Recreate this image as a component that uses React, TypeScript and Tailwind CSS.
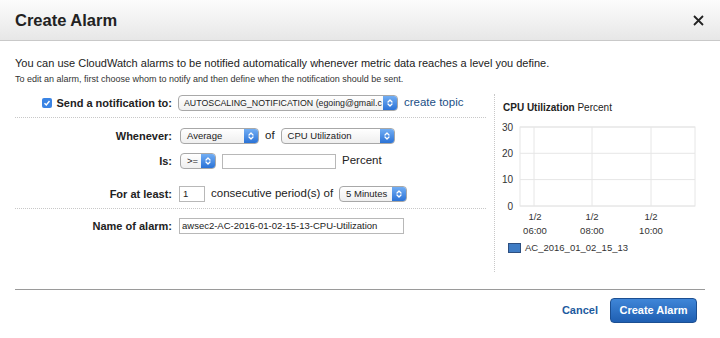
import React from 'react';

const Stepper: React.FC = () => (
  <span className="flex h-full w-[14px] shrink-0 items-center justify-center rounded-r-[3px] bg-linear-to-b from-[#72aef4] to-[#2a72d6]">
    <svg width="6" height="10" viewBox="0 0 6 10">
      <path d="M1 4 L3 2 L5 4 M1 6 L3 8 L5 6" stroke="#fff" strokeWidth="1.3" fill="none" strokeLinecap="round" strokeLinejoin="round" />
    </svg>
  </span>
);

interface SelectProps {
  value: string;
  className: string;
}

const Select: React.FC<SelectProps> = ({ value, className }) => (
  <div className={`flex h-[16px] shrink-0 items-stretch rounded-[4px] border border-[#a8a8a8] bg-linear-to-b from-white to-[#efefef] ${className}`}>
    <span className="flex-1 overflow-hidden whitespace-nowrap pl-[6px] text-[9.5px] leading-[14px] text-[#222]">{value}</span>
    <Stepper />
  </div>
);

const Label: React.FC<{ children: React.ReactNode }> = ({ children }) => (
  <div className="w-[157px] shrink-0 text-right text-[11px] font-bold text-[#222]">{children}</div>
);

const Chart: React.FC = () => {
  const hLines = [8, 34.3, 60.6, 87];
  const vLines = [34, 92, 151];
  return (
    <svg width="200" height="120" viewBox="0 0 200 120" className="block">
      <rect x="20" y="8" width="175" height="79" fill="#fff" stroke="#e6e6e6" />
      {hLines.map((y) => (
        <line key={y} x1="20" x2="195" y1={y} y2={y} stroke="#e6e6e6" />
      ))}
      {vLines.map((x) => (
        <line key={x} x1={x} x2={x} y1="8" y2="87" stroke="#e6e6e6" />
      ))}
      {['30', '20', '10', '0'].map((t, i) => (
        <text key={t} x="13" y={hLines[i] + 3.5} textAnchor="end" fontSize="10" fill="#333" fontFamily="Liberation Sans, Arial, sans-serif">{t}</text>
      ))}
      {[35, 92, 151].map((x, i) => (
        <g key={x} fontSize="9.5" fill="#333" fontFamily="Liberation Sans, Arial, sans-serif" textAnchor="middle">
          <text x={x} y="101">1/2</text>
          <text x={x} y="115">{['06:00', '08:00', '10:00'][i]}</text>
        </g>
      ))}
    </svg>
  );
};

const App: React.FC = () => {
  return (
    <div className="h-[338px] w-[720px] overflow-hidden bg-white font-['Liberation_Sans',Arial,sans-serif] text-[#222]">
      {/* header */}
      <div className="flex h-[41px] items-center justify-between border-b border-[#c9c9c9] bg-linear-to-b from-[#fcfcfc] to-[#e7e7e7] pl-[15px] pr-[16px]">
        <h1 className="text-[16.5px] font-bold text-[#222]">Create Alarm</h1>
        <svg width="11" height="11" viewBox="0 0 11 11">
          <path d="M1 1 L10 10 M10 1 L1 10" stroke="#222" strokeWidth="1.8" />
        </svg>
      </div>

      <div className="px-[15px]">
        <p className="pt-[15px] text-[11px] leading-[14px]">You can use CloudWatch alarms to be notified automatically whenever metric data reaches a level you define.</p>
        <p className="mt-[4px] text-[9px] leading-[11px] text-[#333]">To edit an alarm, first choose whom to notify and then define when the notification should be sent.</p>

        <div className="mt-[9px] flex">
          {/* form */}
          <div className="w-[471px] shrink-0">
            <div className="border-b border-dotted border-[#c8c8c8] pb-[6px] pt-px">
              <div className="flex h-[16px] items-center gap-[6px]">
                <div className="flex w-[157px] shrink-0 items-center justify-end gap-[5px]">
                  <span className="flex h-[10px] w-[10px] items-center justify-center rounded-[2px] bg-[#3a84e4]">
                    <svg width="8" height="8" viewBox="0 0 8 8"><path d="M1.5 4.2 L3.3 6 L6.5 2" stroke="#fff" strokeWidth="1.4" fill="none" /></svg>
                  </span>
                  <span className="text-[11px] font-bold">Send a notification to:</span>
                </div>
                <div className="flex h-[16px] w-[220px] shrink-0 items-stretch rounded-[4px] border border-[#a8a8a8] bg-linear-to-b from-white to-[#efefef]">
                  <span className="flex-1 overflow-hidden whitespace-nowrap pl-[5px] text-[8.8px] leading-[14px] text-[#222]">AUTOSCALING_NOTIFICATION (egoing@gmail.c</span>
                  <Stepper />
                </div>
                <span className="text-[11.5px] text-[#1b4f86]">create topic</span>
              </div>
            </div>

            <div className="flex flex-col border-b border-dotted border-[#c8c8c8] pb-[6px] pt-[10px]">
              <div className="flex h-[16px] items-center">
                <Label>Whenever:</Label>
                <div className="ml-[8px] flex items-center gap-[6px]">
                  <Select value="Average" className="w-[79px]" />
                  <span className="text-[11.5px]">of</span>
                  <Select value="CPU Utilization" className="w-[114px]" />
                </div>
              </div>
              <div className="mt-[9px] flex h-[16px] items-center">
                <Label>Is:</Label>
                <div className="ml-[8px] flex items-center gap-[6px]">
                  <Select value=">=" className="w-[36px]" />
                  <div className="h-[15px] w-[114px] border border-[#b8b8b8] bg-white" />
                  <span className="text-[11.5px]">Percent</span>
                </div>
              </div>
              <div className="mt-[17px] flex h-[16px] items-center">
                <Label>For at least:</Label>
                <div className="ml-[7px] flex items-center gap-[6px]">
                  <div className="flex h-[16px] w-[26px] items-center border border-[#b8b8b8] bg-white pl-[3px] text-[9.5px]">1</div>
                  <span className="text-[11.5px]">consecutive period(s) of</span>
                  <Select value="5 Minutes" className="w-[68px]" />
                </div>
              </div>
            </div>

            <div className="pt-[9px]">
              <div className="flex h-[16px] items-center">
                <Label>Name of alarm:</Label>
                <div className="ml-[7px] flex h-[16px] w-[225px] items-center border border-[#b8b8b8] bg-white pl-[2px] text-[9.5px]">awsec2-AC-2016-01-02-15-13-CPU-Utilization</div>
              </div>
            </div>
          </div>

          {/* chart */}
          <div className="ml-[8px] h-[178px] flex-1 border-l border-dotted border-[#c8c8c8] pl-[8px]">
            <div className="pt-[8px] text-[10px] leading-[12px]">
              <span className="font-bold">CPU Utilization</span> Percent
            </div>
            <div className="ml-[-3px] mt-[5px]">
              <Chart />
            </div>
            <div className="mt-[2px] flex items-center gap-[4px] pl-[5px]">
              <span className="h-[10px] w-[13px] border border-[#2d4f80] bg-[#3f7cc4]" />
              <span className="text-[9.5px] text-[#333]">AC_2016_01_02_15_13</span>
            </div>
          </div>
        </div>

        {/* footer */}
        <div className="mt-[17px] flex items-center justify-end gap-[12px] border-t border-[#9a9a9a] pr-[8px] pt-[8px]">
          <span className="text-[11px] font-bold text-[#1d5a9e]">Cancel</span>
          <button className="h-[25px] w-[87px] rounded-[4px] border border-[#1c4f92] bg-linear-to-b from-[#3f86d8] to-[#1f5fb2] text-[11px] font-bold text-white">Create Alarm</button>
        </div>
      </div>
    </div>
  );
};

export default App;
